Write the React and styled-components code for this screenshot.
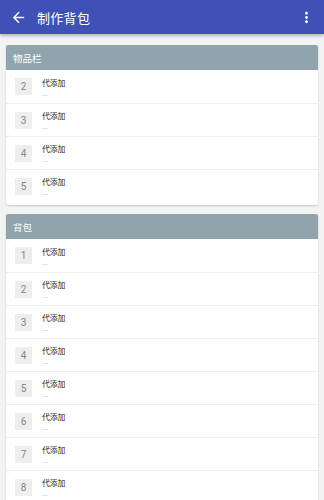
import React from "react";
import styled, { createGlobalStyle } from "styled-components";

const GlobalStyle = createGlobalStyle`
  html, body {
    margin: 0;
    padding: 0;
    background: #f3f3f3;
    font-family: Roboto, "Noto Sans CJK SC", "Noto Sans", sans-serif;
  }
`;

const Page = styled.div`
  width: 324px;
  height: 500px;
  overflow: hidden;
  background: #f3f3f3;
`;

const TopBar = styled.header`
  height: 34px;
  background: #3f51b5;
  display: flex;
  align-items: center;
  padding: 0 9px 0 10px;
  box-shadow: 0 2px 3px rgba(0, 0, 0, 0.25);
  position: relative;
  z-index: 1;
`;

const IconButton = styled.div`
  width: 17px;
  height: 17px;
  display: flex;
  align-items: center;
  justify-content: center;
  svg {
    width: 17px;
    height: 17px;
    fill: #fff;
  }
`;

const Title = styled.h1`
  margin: 0 0 0 10px;
  flex: 1;
  font-size: 13px;
  font-weight: 400;
  color: #fff;
  font-family: "Noto Sans CJK SC", sans-serif;
  letter-spacing: 0.3px;
`;

const Content = styled.main`
  padding: 11px 6px 0;
  display: flex;
  flex-direction: column;
  gap: 9px;
`;

const Card = styled.section`
  background: #fff;
  border-radius: 2px;
  box-shadow: 0 1px 2px rgba(0, 0, 0, 0.18);
  padding-bottom: 3px;
`;

const SectionHead = styled.div`
  height: 25px;
  background: #90a4ae;
  display: flex;
  align-items: center;
  padding-left: 7px;
  color: #fff;
  font-size: 9.5px;
  font-family: "Noto Sans CJK SC", sans-serif;
  border-radius: 2px 2px 0 0;
`;

const Row = styled.div`
  height: 33px;
  box-sizing: border-box;
  display: flex;
  align-items: center;
  padding-left: 9px;
  border-top: ${(p) => (p.$first ? "none" : "1px solid #eeeeee")};
`;

const Badge = styled.div`
  width: 17px;
  height: 17px;
  background: #eeeeee;
  color: #858585;
  font-size: 10px;
  display: flex;
  align-items: center;
  justify-content: center;
  font-family: Roboto, sans-serif;
`;

const Texts = styled.div`
  margin-left: 10px;
  display: flex;
  flex-direction: column;
  padding-top: 3px;
`;

const ItemName = styled.div`
  font-size: 7.8px;
  line-height: 10px;
  color: #1a1a1a;
  font-family: "Noto Sans CJK SC", sans-serif;
`;

const ItemSub = styled.div`
  font-size: 7.5px;
  line-height: 10px;
  color: #999;
  margin-top: 1px;
`;

const ArrowBack = () => (
  <svg viewBox="0 0 24 24">
    <path d="M20 11H7.83l5.59-5.59L12 4l-8 8 8 8 1.41-1.41L7.83 13H20v-2z" />
  </svg>
);

const MoreVert = () => (
  <svg viewBox="0 0 24 24">
    <path d="M12 8c1.1 0 2-.9 2-2s-.9-2-2-2-2 .9-2 2 .9 2 2 2zm0 2c-1.1 0-2 .9-2 2s.9 2 2 2 2-.9 2-2-.9-2-2-2zm0 6c-1.1 0-2 .9-2 2s.9 2 2 2 2-.9 2-2-.9-2-2-2z" />
  </svg>
);

const Section = ({ title, slots }) => (
  <Card>
    <SectionHead>{title}</SectionHead>
    {slots.map((n, i) => (
      <Row key={n} $first={i === 0}>
        <Badge>{n}</Badge>
        <Texts>
          <ItemName>代添加</ItemName>
          <ItemSub>...</ItemSub>
        </Texts>
      </Row>
    ))}
  </Card>
);

export default function App() {
  return (
    <Page>
      <GlobalStyle />
      <TopBar>
        <IconButton>
          <ArrowBack />
        </IconButton>
        <Title>制作背包</Title>
        <IconButton>
          <MoreVert />
        </IconButton>
      </TopBar>
      <Content>
        <Section title="物品栏" slots={[2, 3, 4, 5]} />
        <Section title="背包" slots={[1, 2, 3, 4, 5, 6, 7, 8]} />
      </Content>
    </Page>
  );
}
